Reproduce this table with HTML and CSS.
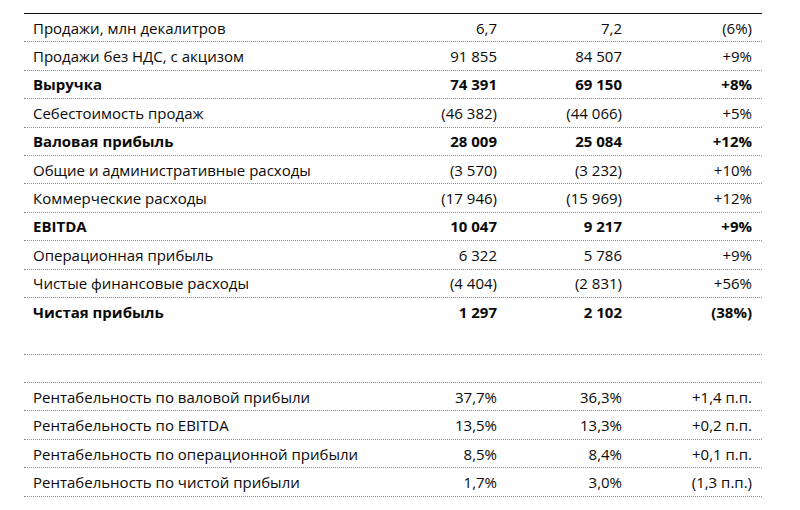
FILE: index.html
```html
<!DOCTYPE html>
<html lang="ru">
<head>
<meta charset="utf-8">
<title>Финансовые показатели</title>
<link rel="stylesheet" href="styles.css">
</head>
<body>
<div class="table">
  <div class="row"><span class="label">Продажи, млн декалитров</span><span class="num">6,7</span><span class="num">7,2</span><span class="num chg">(6%)</span></div>
  <div class="row"><span class="label">Продажи без НДС, с акцизом</span><span class="num">91 855</span><span class="num">84 507</span><span class="num chg">+9%</span></div>
  <div class="row bold"><span class="label">Выручка</span><span class="num">74 391</span><span class="num">69 150</span><span class="num chg">+8%</span></div>
  <div class="row"><span class="label">Себестоимость продаж</span><span class="num">(46 382)</span><span class="num">(44 066)</span><span class="num chg">+5%</span></div>
  <div class="row bold"><span class="label">Валовая прибыль</span><span class="num">28 009</span><span class="num">25 084</span><span class="num chg">+12%</span></div>
  <div class="row"><span class="label">Общие и административные расходы</span><span class="num">(3 570)</span><span class="num">(3 232)</span><span class="num chg">+10%</span></div>
  <div class="row"><span class="label">Коммерческие расходы</span><span class="num">(17 946)</span><span class="num">(15 969)</span><span class="num chg">+12%</span></div>
  <div class="row bold"><span class="label">EBITDA</span><span class="num">10 047</span><span class="num">9 217</span><span class="num chg">+9%</span></div>
  <div class="row"><span class="label">Операционная прибыль</span><span class="num">6 322</span><span class="num">5 786</span><span class="num chg">+9%</span></div>
  <div class="row"><span class="label">Чистые финансовые расходы</span><span class="num">(4 404)</span><span class="num">(2 831)</span><span class="num chg">+56%</span></div>
  <div class="row bold tall"><span class="label">Чистая прибыль</span><span class="num">1 297</span><span class="num">2 102</span><span class="num chg">(38%)</span></div>
  <div class="row blank"></div>
  <div class="row"><span class="label">Рентабельность по валовой прибыли</span><span class="num">37,7%</span><span class="num">36,3%</span><span class="num chg">+1,4 п.п.</span></div>
  <div class="row"><span class="label">Рентабельность по EBITDA</span><span class="num">13,5%</span><span class="num">13,3%</span><span class="num chg">+0,2 п.п.</span></div>
  <div class="row"><span class="label">Рентабельность по операционной прибыли</span><span class="num">8,5%</span><span class="num">8,4%</span><span class="num chg">+0,1 п.п.</span></div>
  <div class="row"><span class="label">Рентабельность по чистой прибыли</span><span class="num">1,7%</span><span class="num">3,0%</span><span class="num chg">(1,3 п.п.)</span></div>
</div>
</body>
</html>
```

FILE: styles.css
```css
html, body {
  margin: 0;
  padding: 0;
  background: #ffffff;
}

body {
  font-family: "Open Sans", "Lato", "Liberation Sans", sans-serif;
  font-size: 15px;
  color: #0a0a0a;
}

.table {
  margin: 13px 38px 0 24px;
  border-top: 1px solid #111111;
}

.row {
  display: grid;
  grid-template-columns: 1fr 118px 125px 140px;
  align-items: center;
  height: 28.4px;
  box-sizing: border-box;
  border-bottom: 1px dotted #8a8a8a;
}

.row.tall {
  height: 56.8px;
  align-items: start;
  padding-top: 4px;
}

.row.blank {
  height: 28.4px;
}

.label {
  padding-left: 9px;
}

.num {
  text-align: right;
}

.chg {
  padding-right: 10px;
}

.bold {
  font-weight: bold;
}
```
